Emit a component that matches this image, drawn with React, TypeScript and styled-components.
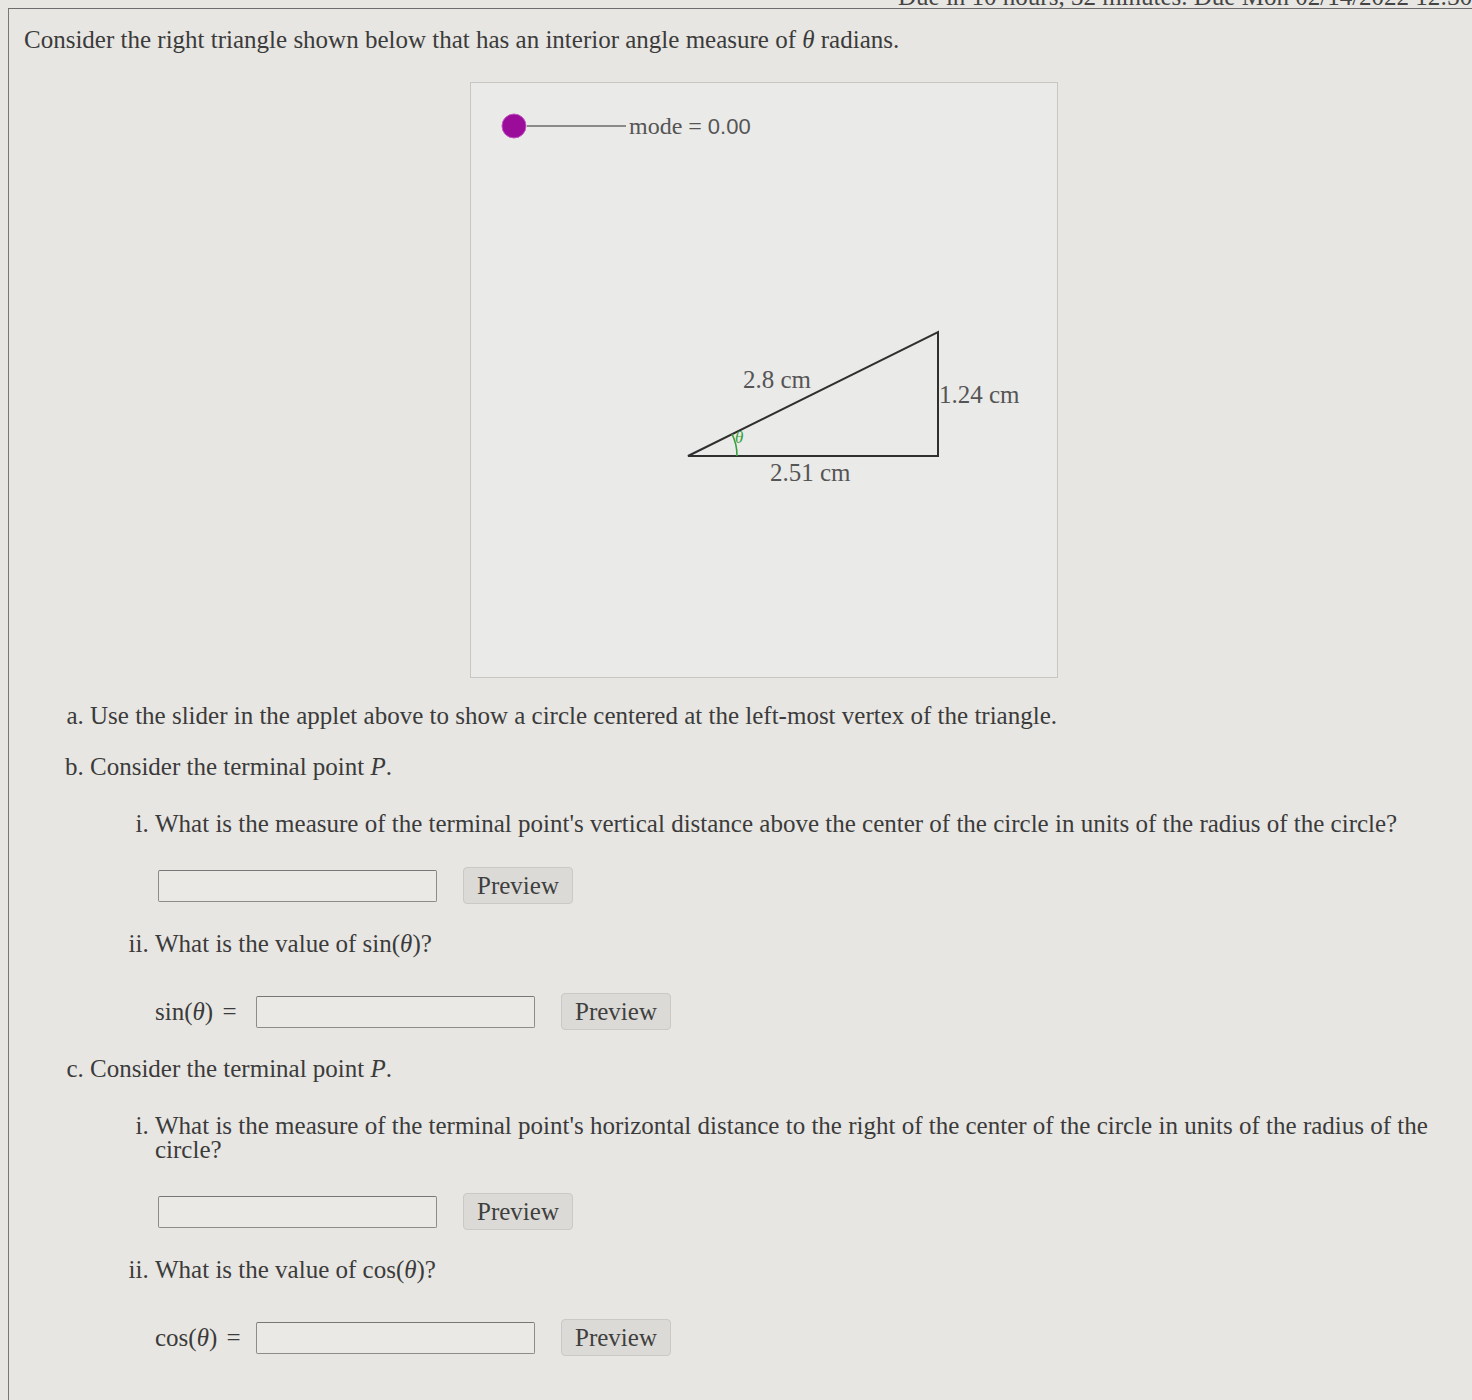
import React from 'react'
import styled, { createGlobalStyle } from 'styled-components'

const GlobalStyle = createGlobalStyle`
  html, body {
    margin: 0;
    padding: 0;
    background: #e7e6e2;
  }
  body {
    font-family: "Liberation Serif", "Times New Roman", serif;
    color: #3b3b3b;
  }
`

const Page = styled.div`
  width: 1472px;
  min-height: 1400px;
  overflow: hidden;
`

const DueBar = styled.div`
  height: 8px;
  overflow: hidden;
  padding-left: 898px;
  white-space: nowrap;
  font-size: 25px;
  line-height: 24px;
  color: #444;

  span {
    display: block;
    margin-top: -15px;
  }
`

const Frame = styled.div`
  margin-left: 8px;
  border-top: 1.5px solid #6d6d6d;
  border-left: 1.5px solid #777;
  min-height: 1392px;
  padding: 19px 30px 0 15px;
  box-sizing: border-box;
`

const Intro = styled.p`
  margin: 0;
  font-size: 25px;
  line-height: 24px;
`

const Applet = styled.div`
  margin: 30px 0 0 446px;
  width: 588px;
  height: 596px;
  border: 1px solid #c6c6c4;
  background: #eaeae8;
  box-sizing: border-box;

  svg {
    display: block;
  }
`

const Parts = styled.ol`
  list-style: lower-alpha;
  margin: 26px 0 0;
  padding-left: 66px;
  font-size: 25px;
  line-height: 24px;
`

const Part = styled.li`
  & + & {
    margin-top: 27px;
  }
`

const SubParts = styled.ol`
  list-style: lower-roman;
  margin: 33px 0 0;
  padding-left: 65px;
`

const SubPart = styled.li`
  & + & {
    margin-top: 28px;
  }
`

const AnswerRow = styled.div<{ $labelled?: boolean }>`
  display: flex;
  align-items: center;
  margin-top: ${({ $labelled }) => ($labelled ? '37px' : '31px')};
  margin-left: ${({ $labelled }) => ($labelled ? '0' : '3px')};
  height: 37px;
`

const Label = styled.span`
  width: 101px;
  white-space: nowrap;
  word-spacing: 3px;
`

const AnswerInput = styled.input`
  width: 279px;
  height: 32px;
  box-sizing: border-box;
  border: 1px solid #8c8c8a;
  border-top-color: #777;
  border-radius: 2px;
  background: #ebe9e5;
  margin: 0 26px 0 0;
`

const PreviewButton = styled.button`
  width: 110px;
  height: 37px;
  border: 1px solid #cbc9c5;
  border-radius: 4px;
  background: #dcdad6;
  font-family: "Liberation Serif", "Times New Roman", serif;
  font-size: 25px;
  color: #3f3f3f;
  padding: 0;
`

const Theta = styled.i`
  font-family: "Liberation Serif", serif;
`

const Var = styled.i``

const MathFn = ({ fn }: { fn: string }) => (
  <span>
    {fn}(<Theta>θ</Theta>)
  </span>
)

const Answer = ({ label }: { label?: string }) => (
  <AnswerRow $labelled={!!label}>
    {label && (
      <Label>
        <MathFn fn={label} /> =
      </Label>
    )}
    <AnswerInput type="text" />
    <PreviewButton type="button">Preview</PreviewButton>
  </AnswerRow>
)

const TriangleApplet = () => (
  <Applet>
    <svg width="586" height="594" viewBox="0 0 586 594">
      <line x1="56" y1="43" x2="155" y2="43" stroke="#6a6a6a" strokeWidth="1.5" />
      <circle cx="43" cy="43" r="12" fill="#9b0c9b" stroke="#c054c0" strokeWidth="1" />
      <text x="158" y="51" fontSize="24" fill="#555" fontFamily="Liberation Serif, serif">
        mode = <tspan fontFamily="Liberation Sans, sans-serif" fontSize="22">0.00</tspan>
      </text>

      <polygon points="217,373 467,373 467,249" fill="none" stroke="#2f2f2f" strokeWidth="2" strokeLinejoin="miter" />
      <path d="M 266 373 A 49 49 0 0 0 261 351" fill="none" stroke="#35a040" strokeWidth="1.6" />
      <text x="264" y="360" fontSize="17" fontStyle="italic" fill="#35a040" fontFamily="Liberation Serif, serif">
        θ
      </text>

      <text x="272" y="305" fontSize="25" fill="#555" fontFamily="Liberation Serif, serif">
        2.8 cm
      </text>
      <text x="468" y="320" fontSize="25" fill="#555" fontFamily="Liberation Serif, serif">
        1.24 cm
      </text>
      <text x="299" y="398" fontSize="25" fill="#555" fontFamily="Liberation Serif, serif">
        2.51 cm
      </text>
    </svg>
  </Applet>
)

export default function App() {
  return (
    <Page>
      <GlobalStyle />
      <DueBar>
        <span>Due in 10 hours, 32 minutes. Due Mon 02/14/2022 12:30pm</span>
      </DueBar>
      <Frame>
        <Intro>
          Consider the right triangle shown below that has an interior angle measure of <Theta>θ</Theta> radians.
        </Intro>

        <TriangleApplet />

        <Parts>
          <Part>Use the slider in the applet above to show a circle centered at the left-most vertex of the triangle.</Part>
          <Part>
            Consider the terminal point <Var>P</Var>.
            <SubParts>
              <SubPart>
                What is the measure of the terminal point's vertical distance above the center of the circle in units
                of the radius of the circle?
                <Answer />
              </SubPart>
              <SubPart>
                What is the value of <MathFn fn="sin" />?
                <Answer label="sin" />
              </SubPart>
            </SubParts>
          </Part>
          <Part>
            Consider the terminal point <Var>P</Var>.
            <SubParts>
              <SubPart>
                What is the measure of the terminal point's horizontal distance to the right of the center of the
                circle in units of the radius of the circle?
                <Answer />
              </SubPart>
              <SubPart>
                What is the value of <MathFn fn="cos" />?
                <Answer label="cos" />
              </SubPart>
            </SubParts>
          </Part>
        </Parts>
      </Frame>
    </Page>
  )
}
